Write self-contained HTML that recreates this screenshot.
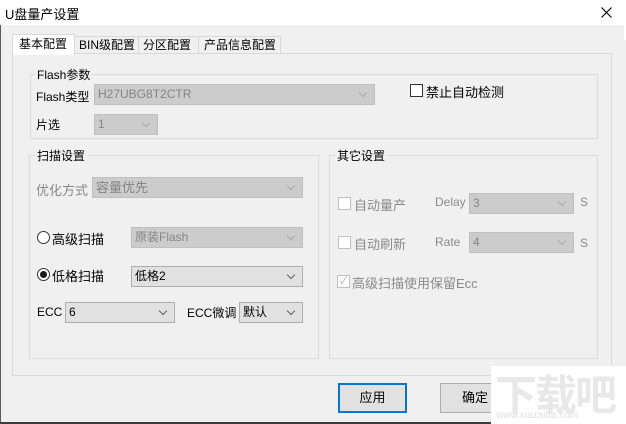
<!DOCTYPE html>
<html><head><meta charset="utf-8"><style>
*{margin:0;padding:0;box-sizing:border-box}
body{width:626px;height:424px;overflow:hidden;background:#f0f0f0;font-family:"Liberation Sans","Microsoft YaHei","Noto Sans CJK SC",sans-serif;font-size:12px;color:#000;position:relative}
.a{position:absolute;white-space:nowrap}
.grp{position:absolute;border:1px solid #dcdcdc}
.lg{position:absolute;background:#f0f0f0;padding:0 2px;font-size:12px}
.cb{position:absolute;height:21px;border:1px solid #adadad;background:#e1e1e1;font-size:12px;line-height:19px;padding-left:3px}
.cb.d{background:#cccccc;border-color:#bfbfbf;color:#838383}
.cb:after{content:"";position:absolute;right:8px;top:5px;width:5px;height:5px;border-right:1px solid #606060;border-bottom:1px solid #606060;transform:rotate(45deg)}
.cb.d:after{border-color:#a8a8a8}
.ck{position:absolute;width:13px;height:13px;border:1px solid #333;background:#fff}
.ck.d{border-color:#c0c0c0}
.gr{color:#8a8a8a}
</style></head><body>
<div class="a" style="left:0;top:0;width:626px;height:25px;background:#fff"></div>
<div class="a" style="left:5px;top:4px;font-size:13px">U盘量产设置</div>
<svg class="a" style="left:601px;top:7px" width="11" height="11"><path d="M0.5 0.5L10.5 10.5M10.5 0.5L0.5 10.5" stroke="#000" stroke-width="1.1"/></svg>
<div class="a" style="left:0;top:25px;width:1px;height:399px;background:#5a5a5a"></div>
<div class="a" style="left:0;top:422px;width:626px;height:2px;background:#3c3c3c"></div>

<div class="a" style="left:12px;top:53px;width:600px;height:323px;border:1px solid #d9d9d9;background:#f0f0f0"></div>
<div class="a" style="left:74px;top:36px;width:65px;height:18px;border:1px solid #d9d9d9;background:#f0f0f0;padding-left:4px;line-height:16px;font-size:12px">BIN级配置</div>
<div class="a" style="left:138px;top:36px;width:61px;height:18px;border:1px solid #d9d9d9;background:#f0f0f0;padding-left:4px;line-height:16px">分区配置</div>
<div class="a" style="left:198px;top:36px;width:83px;height:18px;border:1px solid #d9d9d9;background:#f0f0f0;padding-left:5px;line-height:16px">产品信息配置</div>
<div class="a" style="left:12px;top:34px;width:63px;height:21px;border:1px solid #d9d9d9;border-bottom:none;background:#fff;padding-left:6px;line-height:18px">基本配置</div>

<div class="grp" style="left:30px;top:74px;width:568px;height:65px"></div>
<div class="lg" style="left:35px;top:66px">Flash参数</div>
<div class="a" style="left:36px;top:88px">Flash类型</div>
<div class="cb d" style="left:94px;top:84px;width:281px">H27UBG8T2CTR</div>
<div class="a" style="left:36px;top:116px">片选</div>
<div class="cb d" style="left:94px;top:114px;width:64px">1</div>
<div class="ck" style="left:410px;top:84px"></div>
<div class="a" style="left:426px;top:82px;font-size:13px">禁止自动检测</div>

<div class="grp" style="left:29px;top:155px;width:290px;height:204px"></div>
<div class="lg" style="left:35px;top:147px">扫描设置</div>
<div class="a gr" style="left:36px;top:180px;font-size:13px">优化方式</div>
<div class="cb d" style="left:92px;top:177px;width:211px;font-size:13px">容量优先</div>
<div class="a" style="left:37px;top:231px;width:13px;height:13px;border:1px solid #333;border-radius:50%;background:#fff"></div>
<div class="a" style="left:52px;top:229px;font-size:13px">高级扫描</div>
<div class="cb d" style="left:131px;top:227px;width:172px;font-size:12px">原装Flash</div>
<div class="a" style="left:37px;top:268px;width:13px;height:13px;border:1px solid #333;border-radius:50%;background:#fff"><div style="position:absolute;left:2px;top:2px;width:7px;height:7px;border-radius:50%;background:#1a1a1a"></div></div>
<div class="a" style="left:52px;top:266px;font-size:13px">低格扫描</div>
<div class="cb" style="left:131px;top:266px;width:172px;font-size:12px">低格2</div>
<div class="a" style="left:37px;top:305px">ECC</div>
<div class="cb" style="left:65px;top:302px;width:110px">6</div>
<div class="a" style="left:187px;top:304px">ECC微调</div>
<div class="cb" style="left:239px;top:302px;width:64px">默认</div>

<div class="grp" style="left:329px;top:155px;width:269px;height:204px"></div>
<div class="lg" style="left:335px;top:147px">其它设置</div>
<div class="ck d" style="left:338px;top:197px"></div>
<div class="a gr" style="left:354px;top:195px;font-size:13px">自动量产</div>
<div class="a gr" style="left:435px;top:195px">Delay</div>
<div class="cb d" style="left:469px;top:193px;width:105px">3</div>
<div class="a gr" style="left:580px;top:195px">S</div>
<div class="ck d" style="left:338px;top:236px"></div>
<div class="a gr" style="left:354px;top:234px;font-size:13px">自动刷新</div>
<div class="a gr" style="left:435px;top:235px">Rate</div>
<div class="cb d" style="left:469px;top:232px;width:105px">4</div>
<div class="a gr" style="left:580px;top:236px">S</div>
<div class="ck d" style="left:337px;top:275px;font-size:10px;line-height:11px;color:#aaa;text-align:center">✓</div>
<div class="a gr" style="left:352px;top:273px;font-size:13px">高级扫描使用保留Ecc</div>

<div class="a" style="left:338px;top:383px;width:69px;height:30px;border:2px solid #0078d7;background:#e1e1e1;text-align:center;line-height:26px;font-size:13px">应用</div>
<div class="a" style="left:440px;top:383px;width:70px;height:30px;border:1px solid #adadad;background:#e1e1e1;padding-left:21px;line-height:28px;font-size:13px">确定</div>
<div class="a" style="left:491px;top:366px;width:135px;height:58px;background:#fff"></div>
<div class="a" style="left:495px;top:362px;font-size:42px;color:#e8e8e8;letter-spacing:-2px;font-weight:bold">下载吧</div>
<div class="a" style="left:496px;top:410px;font-size:10px;color:#e0e0e0">www.xiazaiba.com</div>
<div class="a" style="left:624px;top:0;width:2px;height:40px;background:#fff"></div>
</body></html>
